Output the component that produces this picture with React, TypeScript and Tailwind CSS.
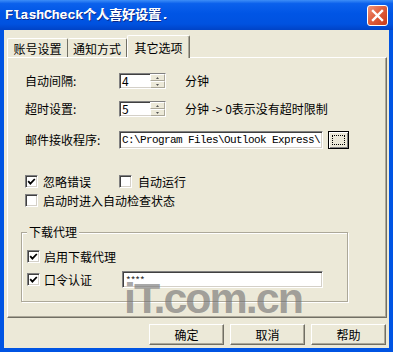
import React from 'react';

const sunken =
  'border border-t-[#808080] border-l-[#808080] border-b-white border-r-white shadow-[inset_1px_1px_0_#404040,inset_-1px_-1px_0_#d4d0c8] bg-white';
const raised =
  'border border-t-white border-l-white border-r-[#716f64] border-b-[#716f64] shadow-[inset_-1px_-1px_0_#aca899] bg-[#ece9d8]';

function Check({ checked }: { checked?: boolean }) {
  return (
    <span className={`w-[13px] h-[13px] shrink-0 flex items-center justify-center ${sunken}`}>
      {checked && (
        <svg width="9" height="9" viewBox="0 0 9 9">
          <polyline points="1.2,4.2 3.4,6.6 7.8,2" fill="none" stroke="#000" strokeWidth="1.8" />
        </svg>
      )}
    </span>
  );
}

function Spin({ value }: { value: string }) {
  return (
    <div className={`w-[47px] h-[16px] flex items-center ${sunken}`}>
      <span className="flex-1 pl-[2px] leading-none">{value}</span>
      <div className="w-[15px] h-full flex flex-col">
        {[0, 1].map((i) => (
          <span key={i} className="flex-1 flex items-center justify-center bg-[#ece9d8] border border-t-white border-l-white border-r-[#aca899] border-b-[#aca899]">
            <svg width="3" height="2" viewBox="0 0 3 2">
              <polygon points={i === 0 ? '0,2 1.5,0 3,2' : '0,0 1.5,2 3,0'} fill="#555" />
            </svg>
          </span>
        ))}
      </div>
    </div>
  );
}

export default function App() {
  return (
    <div className="relative w-[393px] h-[352px] flex flex-col bg-[#0054e3] font-['Noto_Sans_CJK_SC',sans-serif] text-[12px] text-black overflow-hidden">
      {/* Title bar */}
      <div className="h-[30px] shrink-0 flex items-center pl-[5px] pr-[5px] pt-[2px] bg-[linear-gradient(to_bottom,#3d8ef7_0%,#0b61ec_12%,#0055e5_45%,#0052e0_80%,#0043c6_100%)]">
        <span className="flex-1 font-bold text-white text-[13px] font-['Liberation_Mono','Noto_Sans_CJK_SC',monospace] [text-shadow:1px_1px_0_#0a2a8c,0.5px_0_0_#fff]">
          FlashCheck个人喜好设置.
        </span>
        <span className="w-[21px] h-[21px] -mt-[2px] rounded-[3px] border border-white flex items-center justify-center bg-[linear-gradient(135deg,#f0947a_0%,#e0603f_45%,#c93a17_100%)]">
          <svg width="13" height="13" viewBox="0 0 13 13">
            <path d="M2 2 L11 11 M11 2 L2 11" stroke="#fff" strokeWidth="2.4" strokeLinecap="square" />
          </svg>
        </span>
      </div>

      {/* Body */}
      <div className="flex-1 mx-[4px] mb-[4px] bg-[#ece9d8] flex flex-col pt-[5px]">
        {/* Tabs */}
        <div className="h-[22px] flex items-end pl-[3px]">
          <div className="w-[61px] h-[19px] flex items-center justify-center pt-[1px] rounded-t-[2px] border-t border-l border-t-white border-l-white border-r border-r-[#716f64]">
            账号设置
          </div>
          <div className="w-[59px] h-[19px] flex items-center justify-center pt-[1px] rounded-t-[2px] border-t border-t-white border-r border-r-[#716f64]">
            通知方式
          </div>
          <div className="relative z-10 -mb-px w-[63px] h-[23px] flex items-start pt-[3px] justify-center rounded-t-[2px] bg-[#ece9d8] border-t border-l border-t-white border-l-white border-r border-r-[#716f64] shadow-[inset_-1px_0_0_#aca899]">
            其它选项
          </div>
        </div>

        {/* Panel */}
        <div className={`h-[261px] ml-[3px] mr-[2px] flex flex-col pl-[17px] ${raised}`}>
          <div className="mt-[15px] h-[16px] flex items-center">
            <span className="w-[94px]">自动间隔:</span>
            <Spin value="4" />
            <span className="ml-[19px]">分钟</span>
          </div>
          <div className="mt-[12px] h-[16px] flex items-center">
            <span className="w-[94px]">超时设置:</span>
            <Spin value="5" />
            <span className="ml-[19px]">分钟 -&gt; 0表示没有超时限制</span>
          </div>
          <div className="mt-[14px] h-[18px] flex items-center">
            <span className="w-[94px]">邮件接收程序:</span>
            <div className={`w-[204px] h-[18px] flex items-center pl-[2px] overflow-hidden whitespace-nowrap font-['Liberation_Mono',monospace] text-[11px] tracking-[-0.6px] ${sunken}`}>
              C:\Program Files\Outlook Express\
            </div>
            <span className="ml-[5px] w-[21px] h-[18px] flex items-center justify-center border border-black bg-[#ece9d8] shadow-[inset_1px_1px_0_#fff,inset_-1px_-1px_0_#808080]">
              <span className="w-[13px] h-[10px] border border-dotted border-black" />
            </span>
          </div>
          <div className="mt-[26px] h-[13px] flex items-center">
            <span className="w-[94px] flex items-center gap-[5px]">
              <Check checked />
              <span>忽略错误</span>
            </span>
            <Check />
            <span className="ml-[6px]">自动运行</span>
          </div>
          <div className="mt-[6px] h-[13px] flex items-center gap-[5px]">
            <Check />
            <span>启动时进入自动检查状态</span>
          </div>

          {/* Group box */}
          <div className="relative mt-[25px] -ml-[4px] w-[327px] h-[70px] border border-[#aca899] shadow-[inset_1px_1px_0_#fff,1px_1px_0_#fff] flex flex-col pl-[5px]">
            <span className="absolute -top-[9px] left-[5px] px-[2px] bg-[#ece9d8] leading-[16px]">下载代理</span>
            <div className="mt-[17px] h-[13px] flex items-center gap-[4px]">
              <Check checked />
              <span>启用下载代理</span>
            </div>
            <div className="mt-[8px] h-[17px] flex items-center">
              <span className="w-[95px] flex items-center gap-[4px]">
                <Check checked />
                <span>口令认证</span>
              </span>
              <div className={`w-[201px] h-[17px] flex items-center pl-[3px] text-[10px] text-[#333] ${sunken}`}>****</div>
            </div>
          </div>
        </div>

        {/* Buttons */}
        <div className="mt-[6px] h-[21px] flex justify-end gap-[6px] pr-[3px]">
          {['确定', '取消', '帮助'].map((t) => (
            <span key={t} className={`w-[75px] h-[21px] flex items-center justify-center ${raised}`}>
              {t}
            </span>
          ))}
        </div>
      </div>

      {/* Watermark */}
      <span className="absolute left-[124px] top-[277px] leading-none font-['Liberation_Sans',sans-serif] font-bold text-[43px] tracking-[-2px] text-[rgba(110,110,110,0.62)] pointer-events-none">
        iT.com.cn
      </span>
    </div>
  );
}
